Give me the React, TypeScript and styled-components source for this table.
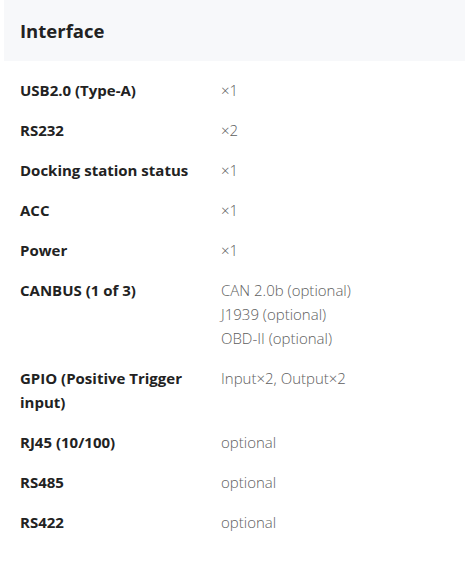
import React from "react";
import styled, { createGlobalStyle } from "styled-components";

const Global = createGlobalStyle`
  html, body { margin: 0; padding: 0; background: #ffffff; }
  body { font-family: "Open Sans", "Noto Sans", "Liberation Sans", sans-serif; }
`;

const Panel = styled.section`
  width: 461px;
  margin-left: 4px;
`;

const Header = styled.header`
  height: 61px;
  background: #f7f8fa;
  display: flex;
  align-items: center;
  padding: 0 16px;
  box-sizing: border-box;
`;

const Title = styled.h2`
  margin: 0;
  font-size: 18.5px;
  font-weight: 700;
  color: #222222;
  letter-spacing: 0;
`;

const Table = styled.div`
  display: grid;
  grid-template-columns: 201px 1fr;
  padding-top: 9px;
`;

const Label = styled.div`
  padding: 8px 8px 8px 16px;
  font-size: 15px;
  line-height: 24px;
  font-weight: 700;
  color: #222222;
`;

const Value = styled.div`
  padding: 8px 16px 8px 16px;
  font-size: 15px;
  line-height: 24px;
  font-weight: 300;
  color: #5e5e5e;
  display: flex;
  flex-direction: column;
`;

const rows: { label: string; values: string[] }[] = [
  { label: "USB2.0 (Type-A)", values: ["×1"] },
  { label: "RS232", values: ["×2"] },
  { label: "Docking station status", values: ["×1"] },
  { label: "ACC", values: ["×1"] },
  { label: "Power", values: ["×1"] },
  { label: "CANBUS (1 of 3)", values: ["CAN 2.0b (optional)", "J1939 (optional)", "OBD-II (optional)"] },
  { label: "GPIO (Positive Trigger input)", values: ["Input×2, Output×2"] },
  { label: "RJ45 (10/100)", values: ["optional"] },
  { label: "RS485", values: ["optional"] },
  { label: "RS422", values: ["optional"] },
];

export default function App() {
  return (
    <>
      <Global />
      <Panel>
        <Header>
          <Title>Interface</Title>
        </Header>
        <Table>
          {rows.map((r) => (
            <React.Fragment key={r.label}>
              <Label>{r.label}</Label>
              <Value>
                {r.values.map((v) => (
                  <span key={v}>{v}</span>
                ))}
              </Value>
            </React.Fragment>
          ))}
        </Table>
      </Panel>
    </>
  );
}
